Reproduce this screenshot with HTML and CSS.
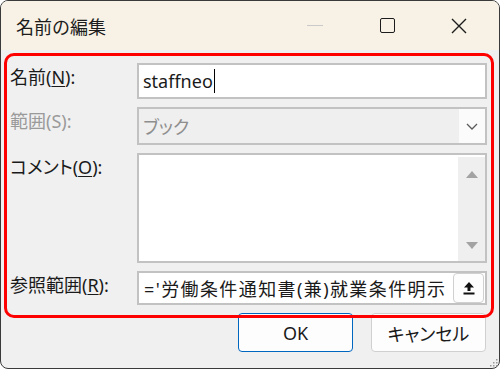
FILE: index.html
```html
<!DOCTYPE html>
<html lang="ja">
<head>
  <meta charset="UTF-8" />
  <title>名前の編集</title>
  <link rel="stylesheet" href="styles.css">
</head>
<body>

  <div class="window">
    <div class="titlebar">
      <div class="title">名前の編集</div>
      <div class="caption-btns">
        <div class="cap-btn"><span class="min-icon"></span></div>
        <div class="cap-btn"><span class="max-icon"></span></div>
        <div class="cap-btn">
          <svg width="16" height="16" viewBox="0 0 16 16">
            <path d="M1 1 L15 15 M15 1 L1 15" stroke="#1c1c1c" stroke-width="1.4" fill="none"/>
          </svg>
        </div>
      </div>
    </div>

    <div class="content">
      <div class="form">
        <div class="label">名前(<u>N</u>):</div>
        <div class="field">
          <span class="value">staffneo</span><span class="caret"></span>
        </div>

        <div class="label disabled">範囲(S):</div>
        <div class="field select">
          <span class="value kana">ブック</span>
          <span class="drop-btn">
            <svg width="12" height="7" viewBox="0 0 12 7">
              <path d="M1 1 L6 6 L11 1" stroke="#5a5a5a" stroke-width="1.3" fill="none"/>
            </svg>
          </span>
        </div>

        <div class="label kana">コメント(<u>O</u>):</div>
        <div class="field memo">
          <div class="memo-text"></div>
          <div class="scrollbar">
            <svg width="12" height="7" viewBox="0 0 12 7"><path d="M0 7 L6 0 L12 7 Z" fill="#a3a3a3"/></svg>
            <svg width="12" height="7" viewBox="0 0 12 7"><path d="M0 0 L6 7 L12 0 Z" fill="#a3a3a3"/></svg>
          </div>
        </div>

        <div class="label">参照範囲(<u>R</u>):</div>
        <div class="field ref">
          <span class="value">='労働条件通知書(兼)就業条件明示</span>
          <span class="pick-btn">
            <svg width="12" height="14" viewBox="0 0 12 14">
              <path d="M6 1 L11 6.5 L7.5 6.5 L7.5 10 L4.5 10 L4.5 6.5 L1 6.5 Z" fill="#111"/>
              <rect x="0.5" y="11.5" width="11" height="2" fill="#111"/>
            </svg>
          </span>
        </div>
      </div>

      <div class="actions">
        <button class="btn primary">OK</button>
        <button class="btn kana">キャンセル</button>
      </div>
    </div>

    <!-- red annotation frame over the form -->
    <div class="highlight"></div>

    <svg class="grip" width="10" height="10" viewBox="0 0 10 10">
      <rect x="8" y="2" width="1.5" height="1.5" fill="#9a9a9a"/>
      <rect x="5" y="5" width="1.5" height="1.5" fill="#9a9a9a"/>
      <rect x="8" y="5" width="1.5" height="1.5" fill="#9a9a9a"/>
      <rect x="2" y="8" width="1.5" height="1.5" fill="#9a9a9a"/>
      <rect x="5" y="8" width="1.5" height="1.5" fill="#9a9a9a"/>
      <rect x="8" y="8" width="1.5" height="1.5" fill="#9a9a9a"/>
    </svg>
  </div>

</body>
</html>
```

FILE: styles.css
```css
body {
  margin: 0;
  background: #ffffff;
  font-family: "Noto Sans", "Noto Sans CJK JP", sans-serif;
  font-size: 18px;
  color: #1a1a1a;
}

.window {
  position: relative;
  width: 500px;
  height: 369px;
  box-sizing: border-box;
  border: 1px solid #3a3a3a;
  border-radius: 8px;
  background: #f0f0f0;
  overflow: hidden;
}

.titlebar {
  height: 49px;
  background: #f7f2e5;
  display: flex;
  align-items: center;
  justify-content: space-between;
}

.title {
  padding-left: 15px;
  font-family: "Noto Sans CJK JP", sans-serif;
  font-size: 18px;
  color: #1c1c1c;
}

.caption-btns {
  display: flex;
  height: 100%;
  padding-right: 4px;
}

.cap-btn {
  width: 72px;
  display: flex;
  align-items: center;
  justify-content: center;
}

.min-icon {
  width: 16px;
  height: 1px;
  background: #c9c9c9;
}

.max-icon {
  width: 13px;
  height: 13px;
  border: 1.5px solid #1c1c1c;
  border-radius: 2px;
}

.kana {
  font-feature-settings: "palt";
}

.content {
  padding: 13px 13px 0 9px;
}

.form {
  display: grid;
  grid-template-columns: 127px 350px;
  grid-template-rows: 36px 38px 110px 34px;
  row-gap: 8px;
}

.label {
  line-height: 24px;
  padding-top: 2px;
  white-space: nowrap;
}

.label u {
  text-underline-offset: 2px;
}

.label.disabled {
  color: #9a9a9a;
}

.field {
  box-sizing: border-box;
  border: 2px solid #c2c2c2;
  background: #ffffff;
  display: flex;
  align-items: center;
  padding-left: 4px;
  overflow: hidden;
}

.value {
  white-space: nowrap;
}

.caret {
  width: 1px;
  height: 24px;
  background: #000;
  margin-left: 1px;
}

.select {
  background: #efefef;
  color: #8e8e8e;
  justify-content: space-between;
  padding-right: 0;
}

.select .value {
  font-family: "Noto Sans CJK JP", sans-serif;
}

.drop-btn {
  width: 26px;
  height: 100%;
  background: #fbfbfb;
  display: flex;
  align-items: center;
  justify-content: center;
}

.memo {
  align-items: stretch;
  padding: 2px 0 0 0;
}

.memo-text {
  flex: 1;
}

.scrollbar {
  width: 27px;
  background: #efefef;
  display: flex;
  flex-direction: column;
  align-items: center;
  justify-content: space-between;
  padding: 14px 0 12px;
}

.ref {
  padding-right: 0;
}

.ref .value {
  flex: 1;
  overflow: hidden;
  padding-left: 1px;
  letter-spacing: 1.4px;
}

.pick-btn {
  flex: none;
  width: 31px;
  height: 30px;
  box-sizing: border-box;
  margin-right: 1px;
  background: #fdfdfd;
  border: 1px solid #d0d0d0;
  border-radius: 4px;
  display: flex;
  align-items: center;
  justify-content: center;
}

.actions {
  display: flex;
  justify-content: flex-end;
  gap: 18px;
  margin-top: 8px;
}

.btn {
  width: 115px;
  height: 39px;
  background: #fdfdfd;
  border: 1px solid #d0d0d0;
  border-radius: 4px;
  font-family: "Noto Sans", "Noto Sans CJK JP", sans-serif;
  font-size: 18px;
  color: #1a1a1a;
  padding: 0;
}

.btn.primary {
  border-color: #0067c0;
}

.highlight {
  position: absolute;
  left: 3px;
  top: 52px;
  width: 490px;
  height: 265px;
  box-sizing: border-box;
  border: 3px solid #ff0000;
  border-radius: 10px;
}

.grip {
  position: absolute;
  right: 1px;
  bottom: 1px;
}
```
